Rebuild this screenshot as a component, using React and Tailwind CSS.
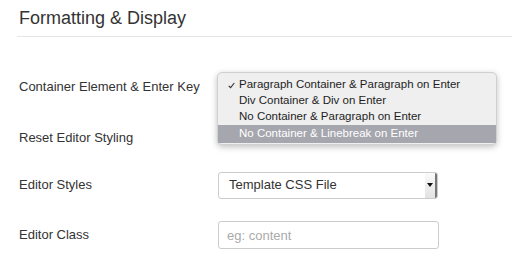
import React from 'react';

const options = [
  'Paragraph Container & Paragraph on Enter',
  'Div Container & Div on Enter',
  'No Container & Paragraph on Enter',
  'No Container & Linebreak on Enter',
];

function Row({ label, className, children }) {
  return (
    <div className={'flex items-center h-[28px] ' + className}>
      <label className="w-[199px] text-[13px] text-[#333]">{label}</label>
      {children}
    </div>
  );
}

function App() {
  return (
    <div className="relative w-[512px] h-[257px] bg-white overflow-hidden font-['Liberation_Sans',Arial,sans-serif]">
      <div className="pl-[17px]">
        <h2 className="pl-[2px] pt-[6px] h-[37px] text-[18px] leading-[24px] text-[#333] border-b border-[#e5e5e5]">
          Formatting &amp; Display
        </h2>
        <div className="pl-[2px]">
          <Row label="Container Element & Enter Key" className="mt-[36px]">
            <div className="w-[220px]" />
          </Row>
          <Row label="Reset Editor Styling" className="mt-[23px]">
            <div className="w-[220px]" />
          </Row>
          <Row label="Editor Styles" className="mt-[19px]">
            <div className="flex items-center w-[220px] h-[27px] border border-[#ccc] rounded-[3px] bg-white overflow-hidden">
              <span className="flex-1 pl-[10px] text-[13px] text-[#333]">Template CSS File</span>
              <div className="flex items-center justify-center w-[12px] h-full bg-gradient-to-b from-[#fafafa] to-[#e2e2e2] border-r-2 border-[#777]">
                <svg width="6" height="4" viewBox="0 0 6 4">
                  <path d="M0 0 H6 L3 4 Z" fill="#111" />
                </svg>
              </div>
            </div>
          </Row>
          <Row label="Editor Class" className="mt-[22px]">
            <input
              placeholder="eg: content"
              className="w-[221px] h-[28px] border border-[#ccc] rounded-[3px] px-[8px] text-[13px] text-[#333] placeholder:text-[#aaa] outline-none"
            />
          </Row>
        </div>
      </div>

      <div className="absolute left-[217px] top-[72px] w-[280px] h-[73px] bg-[#efefef] border border-[#d0d0d0] rounded-[5px] shadow-[0_2px_6px_rgba(0,0,0,0.25)] pt-[4px] text-[11.5px] text-[#1e1e1e]">
        {options.map((o, i) => (
          <div
            key={o}
            className={
              'relative flex items-center h-[16px] pl-[21px] ' +
              (i === 3 ? 'h-[18px] bg-[#a6a6ae] text-white' : '')
            }
          >
            {i === 0 && (
              <svg className="absolute left-[10px] top-[5px]" width="7" height="7" viewBox="0 0 7 7">
                <path d="M0.7 3.8 L2.6 5.7 L6.3 1" stroke="#333" strokeWidth="1.1" fill="none" />
              </svg>
            )}
            {o}
          </div>
        ))}
      </div>
    </div>
  );
}

export default App;
